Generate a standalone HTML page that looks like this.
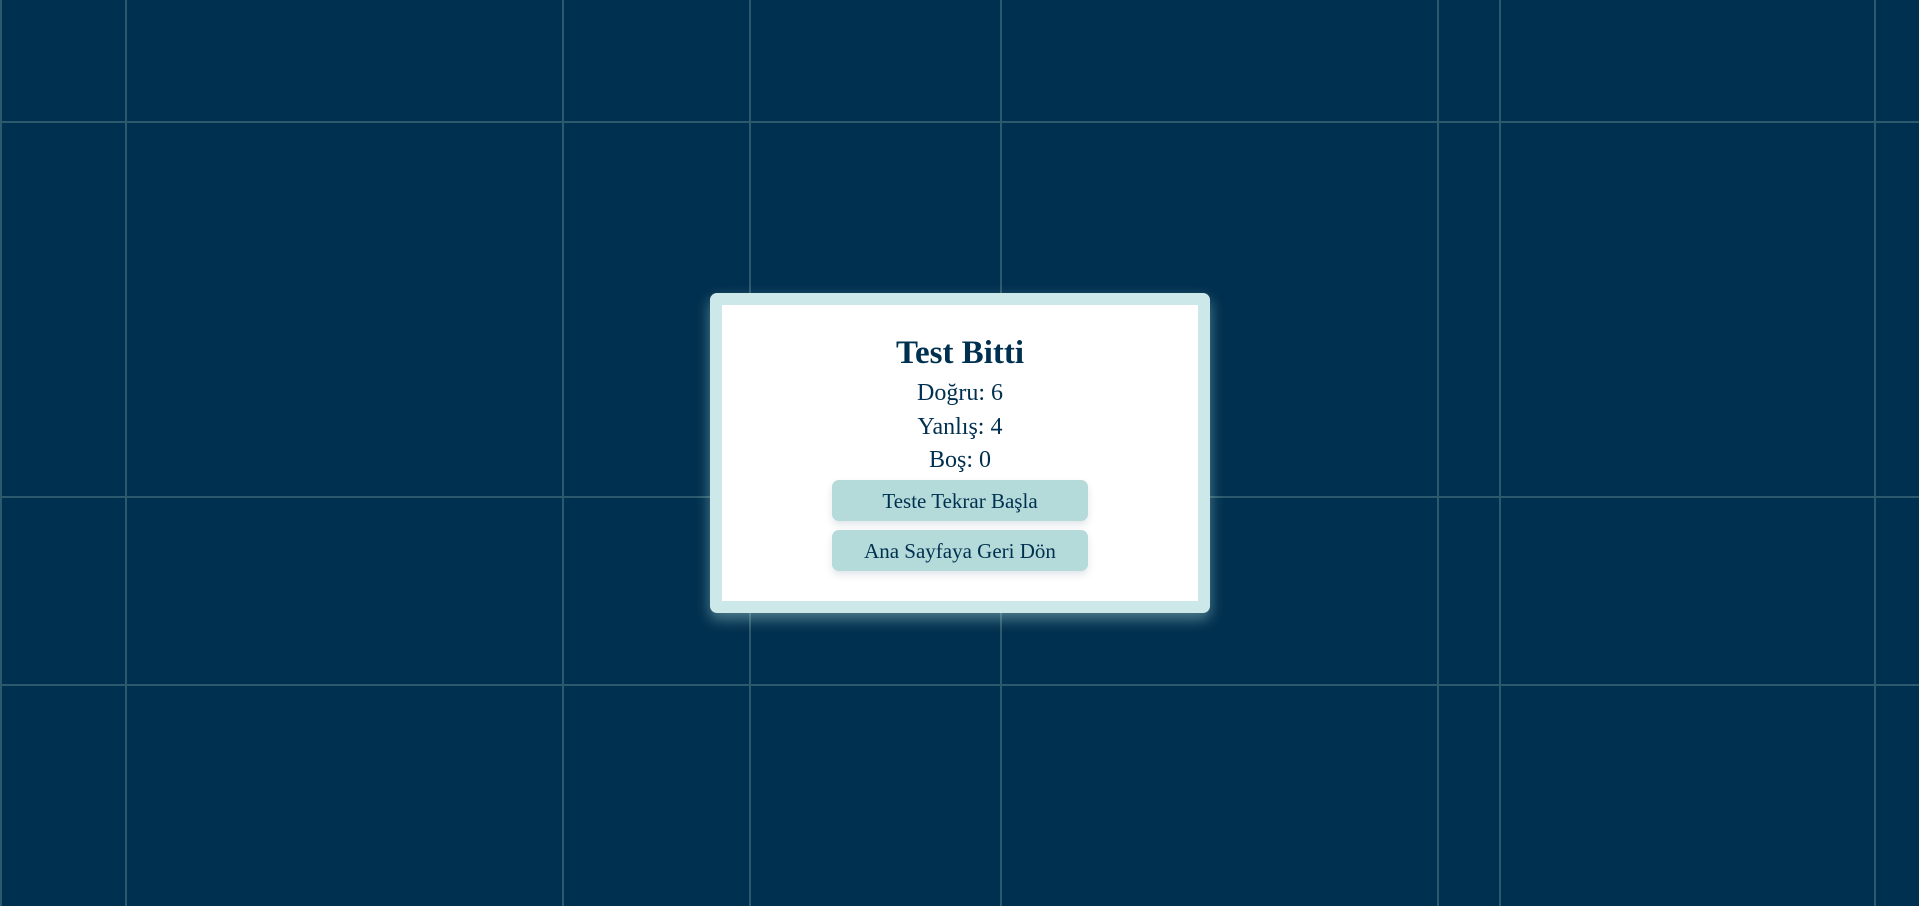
<!DOCTYPE html>
<html><head><meta charset="utf-8"><style>
html,body{margin:0;padding:0;width:1919px;height:906px;overflow:hidden;background:#00304f;font-family:"Liberation Serif",serif;}
.v{position:absolute;top:0;width:2px;height:906px;background:#2c5a6c;}
.h{position:absolute;left:0;height:2px;width:1919px;background:#2c5a6c;}
.card{position:absolute;left:710px;top:293px;width:476px;height:296px;border:12px solid #cde8e8;border-radius:7px;background:#fff;box-shadow:0 6px 14px rgba(180,225,225,.45);text-align:center;color:#00304f;}
h1{margin:0;position:absolute;top:30px;width:100%;font-size:33px;font-weight:bold;line-height:36px;}
.l{position:absolute;width:100%;font-size:24px;line-height:30px;}
.b{position:absolute;left:110px;width:256px;height:41px;background:#b4dada;border-radius:7px;font-size:21px;line-height:43px;box-shadow:0 4px 8px rgba(0,48,79,.12);}
</style></head><body>
<div class="v" style="left:0"></div>
<div class="v" style="left:125px"></div>
<div class="v" style="left:562px"></div>
<div class="v" style="left:749px"></div>
<div class="v" style="left:1000px"></div>
<div class="v" style="left:1437px"></div>
<div class="v" style="left:1499px"></div>
<div class="v" style="left:1874px"></div>
<div class="h" style="top:121px"></div>
<div class="h" style="top:496px"></div>
<div class="h" style="top:684px"></div>
<div class="card">
<h1>Test Bitti</h1>
<div class="l" style="top:73px">Doğru: 6</div>
<div class="l" style="top:107px">Yanlış: 4</div>
<div class="l" style="top:140px">Boş: 0</div>
<div class="b" style="top:175px">Teste Tekrar Başla</div>
<div class="b" style="top:225px">Ana Sayfaya Geri Dön</div>
</div>
</body></html>
